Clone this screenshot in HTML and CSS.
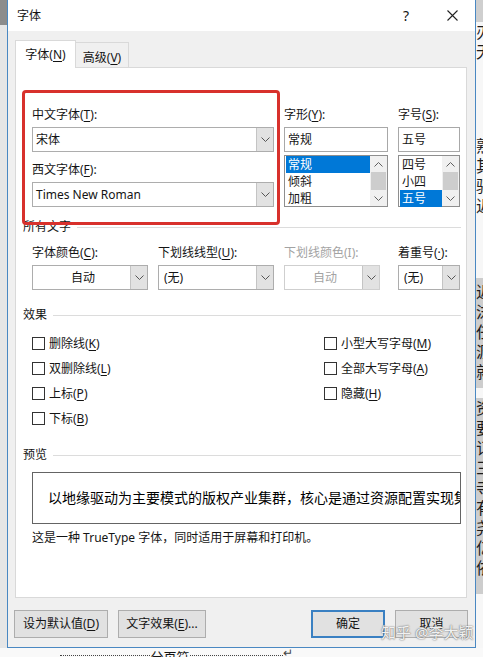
FILE: index.html
```html
<!DOCTYPE html>
<html lang="zh-CN">
<head>
  <meta charset="UTF-8" />
  <title>字体</title>
  <link rel="stylesheet" href="styles.css">
</head>
<body>

  <div class="screen">
    <div class="doc-left"></div>

    <div class="dialog">
      <div class="titlebar">
        <span class="title">字体</span>
        <span class="help">?</span>
        <svg class="close" width="11" height="11" viewBox="0 0 11 11">
          <path d="M0.5 0.5 L10.5 10.5 M10.5 0.5 L0.5 10.5" stroke="#222" stroke-width="1.1" fill="none"/>
        </svg>
      </div>

      <div class="tabs">
        <div class="tab active">字体(<u>N</u>)</div>
        <div class="tab">高级(<u>V</u>)</div>
      </div>

      <div class="panel">
        <!-- annotation drawn over the screenshot -->
        <div class="mark"></div>

        <div class="font-row">
          <div class="col">
            <label>中文字体(<u>T</u>):</label>
            <div class="combo"><span class="value">宋体</span><span class="drop"></span></div>
            <label class="next">西文字体(<u>F</u>):</label>
            <div class="combo"><span class="value">Times New Roman</span><span class="drop"></span></div>
          </div>
          <div class="col">
            <label>字形(<u>Y</u>):</label>
            <div class="textbox">常规</div>
            <div class="listbox">
              <ul>
                <li class="selected">常规</li>
                <li>倾斜</li>
                <li>加粗</li>
              </ul>
              <div class="scroll"><span class="arrow up"></span><span class="thumb"></span><span class="arrow down"></span></div>
            </div>
          </div>
          <div class="col">
            <label>字号(<u>S</u>):</label>
            <div class="textbox">五号</div>
            <div class="listbox">
              <ul>
                <li>四号</li>
                <li>小四</li>
                <li class="selected">五号</li>
              </ul>
              <div class="scroll"><span class="arrow up"></span><span class="thumb"></span><span class="arrow down"></span></div>
            </div>
          </div>
        </div>

        <div class="section-title first">所有文字</div>

        <div class="attr-row">
          <div class="col">
            <label>字体颜色(<u>C</u>):</label>
            <div class="combo"><span class="value center">自动</span><span class="drop"></span></div>
          </div>
          <div class="col">
            <label>下划线线型(<u>U</u>):</label>
            <div class="combo"><span class="value pad">(无)</span><span class="drop"></span></div>
          </div>
          <div class="col">
            <label class="disabled">下划线颜色(I):</label>
            <div class="combo disabled narrow"><span class="value center">自动</span><span class="drop"></span></div>
          </div>
          <div class="col">
            <label>着重号(<u>·</u>):</label>
            <div class="combo"><span class="value pad">(无)</span><span class="drop"></span></div>
          </div>
        </div>

        <div class="section-title">效果</div>

        <div class="checks">
          <div class="check"><span class="box"></span><span>删除线(<u>K</u>)</span></div>
          <div class="check"><span class="box"></span><span>双删除线(<u>L</u>)</span></div>
          <div class="check"><span class="box"></span><span>上标(<u>P</u>)</span></div>
          <div class="check"><span class="box"></span><span>下标(<u>B</u>)</span></div>
          <div class="check"><span class="box"></span><span>小型大写字母(<u>M</u>)</span></div>
          <div class="check"><span class="box"></span><span>全部大写字母(<u>A</u>)</span></div>
          <div class="check"><span class="box"></span><span>隐藏(<u>H</u>)</span></div>
        </div>

        <div class="section-title preview-title">预览</div>
        <div class="preview">以地缘驱动为主要模式的版权产业集群，核心是通过资源配置实现集群化发展</div>
        <p class="note">这是一种 TrueType 字体，同时适用于屏幕和打印机。</p>
      </div>

      <div class="buttons">
        <button class="btn b-default">设为默认值(<u>D</u>)</button>
        <button class="btn b-effects">文字效果(<u>E</u>)...</button>
        <button class="btn b-ok">确定</button>
        <button class="btn b-cancel">取消</button>
      </div>
    </div>

    <div class="doc-right">
      <div class="ribbon"></div>
      <p>刃</p>
      <p>无</p>
      <div class="gap-a"></div>
      <p>熟</p>
      <p>其</p>
      <p>驱</p>
      <p>近</p>
      <div class="gap-b"></div>
      <div class="sel sel-a">
        <p>近</p><p>沫</p><p>任</p><p>沥</p><p>就</p>
      </div>
      <div class="gap-c"></div>
      <div class="sel sel-b">
        <p>资</p><p>要</p><p>订</p><p>三</p><p>寺</p><p>有</p><p>尧</p><p>亿</p><p>依</p>
      </div>
    </div>

    <div class="watermark">知乎 @李大颖</div>
  </div>

  <div class="doc-bottom">
    <span class="dots"></span><span class="pb">分页符</span><span class="dots short"></span><span class="ret">↵</span>
  </div>

</body>
</html>
```

FILE: styles.css
```css
* {
  box-sizing: border-box;
}
body {
  margin: 0;
  width: 483px;
  height: 657px;
  overflow: hidden;
  background: #efefef;
  font-family: "Noto Sans", "Noto Sans CJK SC", sans-serif;
  font-size: 12px;
  line-height: 16px;
  color: #141414;
}
u {
  text-decoration: underline;
  text-underline-offset: 2px;
}
label {
  display: block;
  height: 16px;
}

/* page behind the dialog */
.screen {
  position: relative;
  display: grid;
  grid-template-columns: 7px 469px 7px;
}
.doc-left {
  background: linear-gradient(#8c8c8c 0 25px, #e6e6e6 25px);
}
.doc-right {
  overflow: hidden;
  background: #f7f7f7;
  font-size: 16px;
  line-height: 20px;
  color: #1c1c1c;
  white-space: nowrap;
}
.doc-right p {
  margin: 0;
  height: 20px;
}
.ribbon {
  height: 22px;
  background: #cfcfcf;
}
.gap-a { height: 74px; }
.gap-b { height: 62px; }
.gap-c { height: 10px; }
.sel {
  background: #cdcdcd;
}
.sel-a { height: 110px; padding-top: 4px; }
.sel-b { height: 196px; }

/* dialog */
.dialog {
  height: 648px;
  background: #f0f0f0;
  border: 1px solid #4a88c2;
  border-top: none;
}
.titlebar {
  height: 31px;
  display: flex;
  align-items: center;
  padding-left: 9px;
  background: #fff;
}
.title {
  flex: 1;
}
.help {
  width: 8px;
  margin-right: 36px;
  font-size: 14px;
}
.close {
  margin-right: 17px;
}

.tabs {
  display: flex;
  align-items: flex-end;
  height: 36px;
  padding-left: 7px;
}
.tab {
  position: relative;
  height: 25px;
  padding-top: 7px;
  text-align: center;
  width: 54px;
  margin-left: -1px;
  border: 1px solid #d9d9d9;
  border-bottom: none;
  background: #f0f0f0;
}
.tab.active {
  z-index: 1;
  width: 61px;
  height: 28px;
  margin-left: 0;
  margin-bottom: -1px;
  padding-top: 6px;
  background: #fff;
}

.panel {
  position: relative;
  margin-left: 7px;
  width: 452px;
  height: 531px;
  padding: 39px 5px 0 16px;
  background: #fff;
  border: 1px solid #d9d9d9;
}
.mark {
  position: absolute;
  left: 6px;
  top: 22px;
  width: 258px;
  height: 135px;
  border: 3px solid #d8312c;
  border-radius: 4px;
  z-index: 2;
}

.font-row {
  display: grid;
  grid-template-columns: 242px 104px 62px;
  column-gap: 10px;
}
.col label + * {
  margin-top: 4px;
}
label.next {
  margin-top: 10px;
}

.combo {
  display: flex;
  height: 25px;
  border: 1px solid #adadad;
  background: #fff;
}
.combo .value {
  flex: 1;
  padding-left: 3px;
  line-height: 23px;
  white-space: nowrap;
}
.combo .value.pad {
  padding-left: 5px;
}
.combo .value.center {
  text-align: center;
}
.drop {
  width: 17px;
  background: #e2e2e2 url("data:image/svg+xml,%3Csvg xmlns='http://www.w3.org/2000/svg' width='9' height='5'%3E%3Cpath d='M0.5 0.5 L4.5 4.5 L8.5 0.5' stroke='%23555' fill='none'/%3E%3C/svg%3E") no-repeat center;
  border-left: 1px solid #c4c4c4;
}
.combo.disabled {
  border-color: #cfcfcf;
  color: #a3a3a3;
}
.combo.narrow {
  width: 96px;
}
label.disabled {
  color: #a3a3a3;
}

.textbox {
  height: 25px;
  padding-left: 3px;
  line-height: 23px;
  border: 1px solid #a8a8a8;
}
.listbox {
  display: flex;
  height: 52px;
  margin-top: 3px;
  border: 1px solid #8e8e8e;
}
.listbox ul {
  flex: 1;
  margin: 0;
  padding: 0 0 0 1px;
  list-style: none;
}
.listbox li {
  height: 17px;
  padding-left: 2px;
  line-height: 17px;
}
.listbox li.selected {
  background: #0078d7;
  color: #fff;
}
.scroll {
  display: flex;
  flex-direction: column;
  width: 17px;
  background: #f0f0f0;
}
.arrow {
  height: 16px;
  background: no-repeat center;
}
.arrow.up {
  background-image: url("data:image/svg+xml,%3Csvg xmlns='http://www.w3.org/2000/svg' width='9' height='5'%3E%3Cpath d='M0.5 4.5 L4.5 0.5 L8.5 4.5' stroke='%23606060' fill='none'/%3E%3C/svg%3E");
}
.arrow.down {
  background-image: url("data:image/svg+xml,%3Csvg xmlns='http://www.w3.org/2000/svg' width='9' height='5'%3E%3Cpath d='M0.5 0.5 L4.5 4.5 L8.5 0.5' stroke='%23606060' fill='none'/%3E%3C/svg%3E");
}
.thumb {
  flex: 1;
  margin: 0 1px;
  background: #cdcdcd;
}

.section-title {
  display: flex;
  align-items: center;
  gap: 6px;
  height: 16px;
  margin: 17px 0 0 -9px;
}
.section-title::after {
  content: "";
  flex: 1;
  height: 1px;
  background: #dcdcdc;
}
.section-title.first {
  margin-top: 12px;
}
.section-title.preview-title {
  margin-top: 16px;
}

.attr-row {
  display: grid;
  grid-template-columns: 116px 116px 104px 62px;
  column-gap: 10px;
  margin-top: 10px;
}

.checks {
  display: grid;
  grid-template-columns: 292px 1fr;
  grid-template-rows: repeat(4, 25px);
  grid-auto-flow: column;
  margin-top: 8px;
}
.check {
  display: flex;
  align-items: center;
  gap: 4px;
}
.box {
  width: 13px;
  height: 13px;
  border: 1px solid #333;
  background: #fff;
}

.preview {
  height: 52px;
  margin-top: 9px;
  padding-left: 15px;
  overflow: hidden;
  white-space: nowrap;
  font-size: 14px;
  line-height: 50px;
  color: #000;
  border: 1px solid #646464;
}
.note {
  margin: 6px 0 0;
}

.buttons {
  display: flex;
  gap: 10px;
  margin: 12px 7px 0 6px;
}
.btn {
  height: 28px;
  padding: 0;
  font: inherit;
  color: #141414;
  background: #e1e1e1;
  border: 1px solid #adadad;
}
.b-default { width: 94px; }
.b-effects { width: 88px; }
.b-ok {
  width: 74px;
  margin-left: auto;
  border: 2px solid #3a80c2;
}
.b-cancel { width: 73px; }

.watermark {
  position: absolute;
  left: 381px;
  top: 623px;
  font-size: 15px;
  line-height: 18px;
  color: rgba(255, 255, 255, 0.92);
  text-shadow: 0 0 1px #666, 0 0 2px #888;
  white-space: nowrap;
}

.doc-bottom {
  display: flex;
  align-items: flex-start;
  height: 9px;
  padding-left: 60px;
  overflow: hidden;
  background: #f9f9f9;
}
.dots {
  width: 90px;
  margin-top: 7px;
  border-top: 1px dotted #444;
}
.dots.short {
  width: 93px;
}
.pb {
  width: 40px;
  margin-top: 1px;
  font-size: 13px;
  line-height: 16px;
  text-align: center;
}
.ret {
  margin-top: -1px;
  font-size: 12px;
  line-height: 12px;
  color: #444;
}
```
